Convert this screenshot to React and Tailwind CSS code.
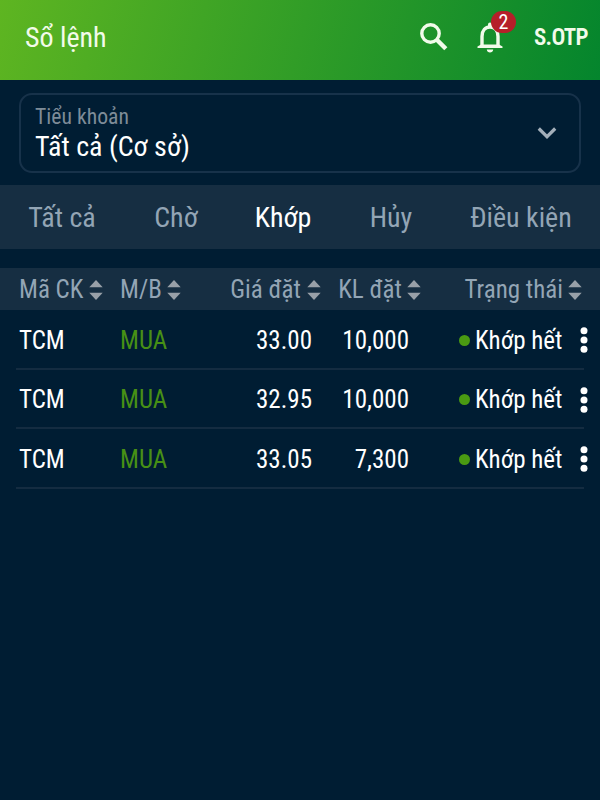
import React, { useState } from 'react';

const tabs = [
  { label: 'Tất cả', style: 'w-[124px]' },
  { label: 'Chờ', style: 'w-[104px]' },
  { label: 'Khớp', style: 'w-[110px]' },
  { label: 'Hủy', style: 'w-[106px]' },
  { label: 'Điều kiện', style: 'w-[154px]' },
];

const orders = [
  { id: 1, symbol: 'TCM', side: 'MUA', price: '33.00', volume: '10,000', status: 'Khớp hết' },
  { id: 2, symbol: 'TCM', side: 'MUA', price: '32.95', volume: '10,000', status: 'Khớp hết' },
  { id: 3, symbol: 'TCM', side: 'MUA', price: '33.05', volume: '7,300', status: 'Khớp hết' },
];

const SortIcon = () => (
  <svg className="h-5 w-[14px] shrink-0" viewBox="0 0 14 20" fill="#98a0a8">
    <path d="M0.3 7.3 7 0l6.700 7.300z" />
    <path d="M0.300 12.700h13.400L7 20z" />
  </svg>
);

const SearchIcon = () => (
  <svg className="h-7 w-7" viewBox="0 0 28 28" fill="none" stroke="#f2fbea">
    <circle cx="10.500" cy="10.500" r="8.700" strokeWidth="3.400" />
    <path d="M16.800 16.800l9 9" strokeWidth="4.400" />
  </svg>
);

const BellIcon = () => (
  <svg className="h-[31px] w-[26px]" viewBox="0 0 26 31" fill="none">
    <path d="M5 24.500V14.500C5 8.500 8.500 5 13 5s8 3.500 8 9.500v10" stroke="#f2fbea" strokeWidth="3.400" />
    <path d="M11 5V2.500a2 2 0 0 1 4 0V5zM.5 26v-1.500L4 22.500h18l3.500 2V26zM9.800 27.500h6.400c0 4-6.400 4-6.400 0z" fill="#f2fbea" />
  </svg>
);

const MoreIcon = () => (
  <svg className="h-[26px] w-2 shrink-0" viewBox="0 0 8 26" fill="#fff">
    <circle cx="4" cy="3.700" r="3.500" />
    <circle cx="4" cy="13" r="3.500" />
    <circle cx="4" cy="22.300" r="3.500" />
  </svg>
);

const App = () => {
  const [active, setActive] = useState('Khớp');

  return (
    <div className="h-[800px] w-[600px] overflow-hidden bg-[#001d33] font-['Roboto_Condensed','Roboto',sans-serif] whitespace-nowrap text-white [font-stretch:75%]">
      <header className="flex h-20 items-center bg-linear-[105deg,#5eb521,#04852d] pl-[25px]">
        <h1 className="w-[395px] pb-[5px] text-[28px] text-[#f2fbea]">Sổ lệnh</h1>
        <div className="mb-[7px] w-[57px]"><SearchIcon /></div>
        <div className="relative mb-[5px] w-[57px]">
          <BellIcon />
          <span className="absolute -top-[11px] left-[14px] flex h-[22px] w-[25px] items-center justify-center rounded-full bg-[#b51f29] text-[20px]">2</span>
        </div>
        <span className="pb-[4px] text-[23px] font-semibold tracking-[-0.700px] text-[#f2fbea]">S.OTP</span>
      </header>

      <div className="mx-[19px] mt-[13px] flex h-[80px] items-center justify-between rounded-[13px] border-2 border-[#17324a] pr-[22px] pl-[14px]">
        <div>
          <div className="text-[21.700px] leading-[27px] text-[#7e8c98]">Tiểu khoản</div>
          <div className="pt-px text-[28px] leading-[32px]">Tất cả (Cơ sở)</div>
        </div>
        <svg className="h-3 w-5" viewBox="0 0 20 12" fill="none" stroke="#a3afba" strokeWidth="3.200">
          <path d="M1.800 1.500 10 9.700l8.200-8.200" />
        </svg>
      </div>

      <nav className="mt-3 flex h-[64px] items-center bg-[#162e42] pt-[2px] text-[28px]">
        {tabs.map((tab) => (
          <button
            key={tab.label}
            onClick={() => setActive(tab.label)}
            className={`${tab.style} text-center ${active === tab.label ? 'text-white' : 'text-[#93a5b5]'}`}
          >
            {tab.label}
          </button>
        ))}
      </nav>

      <div className="mt-[19px] flex h-[42px] items-center bg-[#162e42] pt-px pr-[18px] pl-[19px] text-[25px] text-[#93a5b5]">
        <div className="flex w-[101px] items-center gap-[6px]">Mã CK<SortIcon /></div>
        <div className="flex w-[80px] items-center gap-[5px]">M/B<SortIcon /></div>
        <div className="flex w-[121px] items-center justify-end gap-[6px]">Giá đặt<SortIcon /></div>
        <div className="flex w-[100px] items-center justify-end gap-[5px]">KL đặt<SortIcon /></div>
        <div className="flex flex-1 items-center justify-end gap-[5px]">Trạng thái<SortIcon /></div>
      </div>

      <div className="ml-4 w-[568px] text-[25px]">
        {orders.map((order) => (
          <div key={order.id} className="flex h-[59.500px] items-center border-b-2 border-[#142c41] pt-[3px] pl-[3px]">
            <span className="w-[101px] shrink-0">{order.symbol}</span>
            <span className="w-[80px] shrink-0 text-[#479015]">{order.side}</span>
            <span className="w-[112px] shrink-0 text-right">{order.price}</span>
            <span className="w-[97px] shrink-0 text-right">{order.volume}</span>
            <span className="flex w-[153.500px] shrink-0 items-center justify-end gap-[5px]">
              <i className="size-[11px] rounded-full bg-[#4a9a12]" />
              {order.status}
            </span>
            <span className="ml-[17.500px] shrink-0"><MoreIcon /></span>
          </div>
        ))}
      </div>
    </div>
  );
};

export default App;
